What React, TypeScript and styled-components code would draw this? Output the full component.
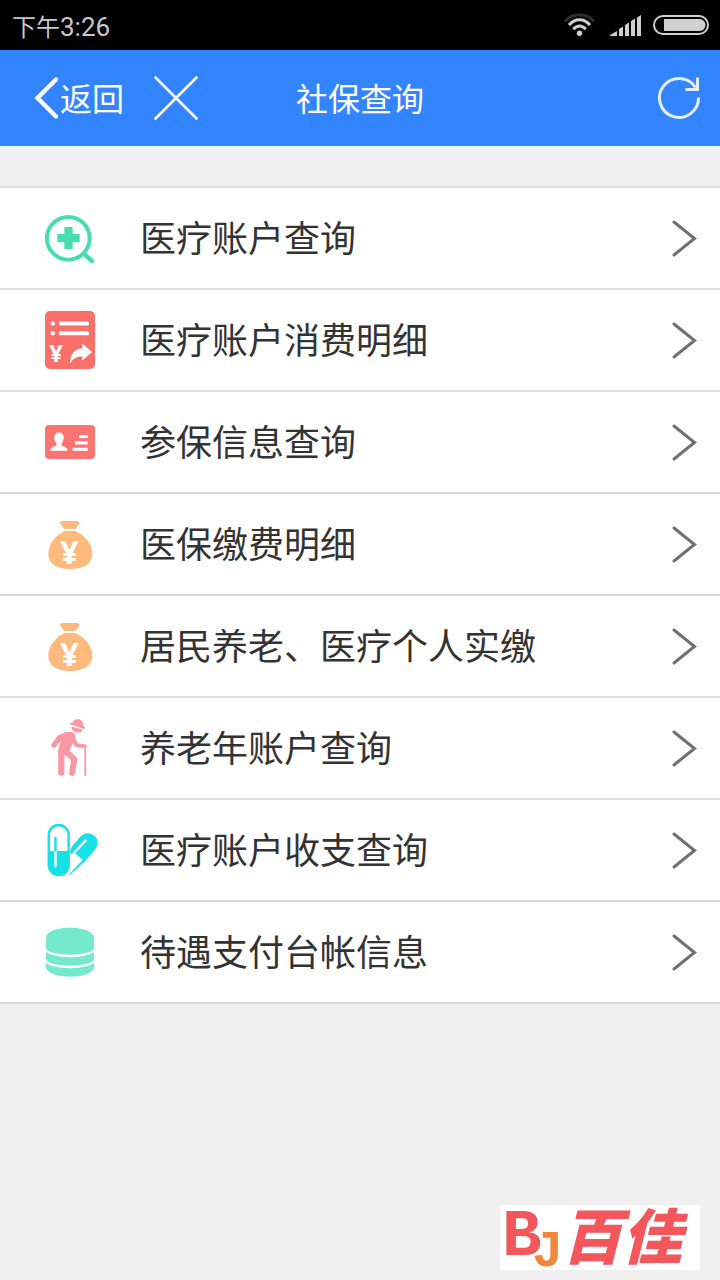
import React from "react";
import styled, { createGlobalStyle } from "styled-components";

const GlobalStyle = createGlobalStyle`
  * { box-sizing: border-box; }
  body {
    margin: 0;
    background: #f0f0f0;
    color: #333;
    font-family: Roboto, "Noto Sans CJK SC", sans-serif;
  }
`;

const Page = styled.div`
  display: flex;
  flex-direction: column;
  min-height: 100vh;
`;

const StatusBar = styled.div`
  display: flex;
  align-items: center;
  justify-content: space-between;
  height: 50px;
  padding: 0 11px 0 12px;
  background: #000;
  color: #c8c8c8;
`;

const Clock = styled.time`
  display: flex;
  align-items: baseline;
  padding-top: 4px;
  font-size: 26px;
  line-height: 32px;
`;

const Period = styled.span`
  font-size: 24px;
`;

const StatusIcons = styled.div`
  display: flex;
  align-items: center;
`;

const Header = styled.header`
  display: grid;
  grid-template-columns: 1fr auto 1fr;
  align-items: center;
  height: 96px;
  padding: 0 16px;
  background: #3385ff;
  color: #fff;
`;

const HeaderGroup = styled.div<{ $end?: boolean }>`
  display: flex;
  align-items: center;
  gap: 28px;
  padding-left: 16px;
  justify-content: ${(p) => (p.$end ? "flex-end" : "flex-start")};
`;

const HeaderButton = styled.button`
  display: flex;
  align-items: center;
  padding: 0;
  border: 0;
  background: none;
  color: inherit;
  font: inherit;
  font-size: 32px;
  line-height: 48px;
  cursor: pointer;
`;

const HeaderLabel = styled.span`
  padding-top: 4px;
`;

const Title = styled.h1`
  margin: 0;
  padding-top: 4px;
  font-size: 32px;
  line-height: 48px;
  font-weight: 400;
`;

const Menu = styled.ul`
  margin: 40px 0 0;
  padding: 0;
  list-style: none;
  border-top: 2px solid #dcdcdc;
`;

const MenuItem = styled.li`
  background: #fff;
  border-bottom: 2px solid #dcdcdc;
`;

const MenuLink = styled.a`
  display: flex;
  align-items: center;
  gap: 40px;
  height: 100px;
  padding: 0 22px 0 40px;
  color: inherit;
  text-decoration: none;
`;

const MenuLabel = styled.span`
  flex: 1;
  padding-top: 4px;
  font-size: 36px;
  line-height: 52px;
`;

const ItemIcon = styled.svg`
  flex: none;
  width: 60px;
  height: 60px;
`;

const Yen = styled.text`
  font-family: "Noto Sans", sans-serif;
  font-weight: 700;
  text-anchor: middle;
  fill: #fff;
`;

const Footer = styled.footer`
  display: flex;
  justify-content: flex-end;
  margin-top: auto;
  padding: 20px 20px 10px;
`;

const Logo = styled.svg`
  width: 200px;
  height: 65px;
  overflow: visible;
  background: #fff;
`;

const Monogram = styled.text`
  font-family: "Liberation Mono", monospace;
  font-weight: 700;
`;

const Wordmark = styled.text`
  font-family: "Noto Sans CJK SC", sans-serif;
  font-weight: 900;
  font-style: italic;
`;

const MedicalSearch = () => (
  <ItemIcon viewBox="0 0 60 60" aria-hidden="true" stroke="#48dcb0" fill="none">
    <circle cx="28.3" cy="30.3" r="21.4" strokeWidth="4" />
    <path d="M44 46l8 7" strokeWidth="4.4" strokeLinecap="round" />
    <path d="M17.3 30.2h22.4M28.5 19v22" strokeWidth="8.3" />
  </ItemIcon>
);

const Bill = () => (
  <ItemIcon viewBox="0 0 60 60" aria-hidden="true" fill="#fff">
    <rect x="5" y="1" width="50" height="58" rx="5" fill="#f9706b" />
    <circle cx="12.8" cy="13.4" r="2.2" />
    <circle cx="12.8" cy="23.2" r="2.2" />
    <rect x="19" y="11.5" width="30" height="4" rx="1.5" />
    <rect x="19" y="21.2" width="30" height="4" rx="1.5" />
    <Yen x="16" y="52" fontSize="24">¥</Yen>
    <path d="M52 42L42.3 33.6v4.6C34 39 30 45 30 53.6c3-5.2 7-7 12.3-7v3.9z" />
  </ItemIcon>
);

const IdCard = () => (
  <ItemIcon viewBox="0 0 60 60" aria-hidden="true" fill="#fff">
    <rect x="5" y="13" width="50" height="34" rx="4" fill="#f87571" />
    <path d="M19 20.5c3 0 4.7 2 4.7 5 0 2.5-1 4.5-2.2 5.7v2.3c2.5 1.2 6 1.7 6 5.3H10.3c0-3.6 3.7-4.1 6.2-5.3v-2.3c-1.2-1.2-2.2-3.2-2.2-5.7 0-3 1.7-5 4.7-5z" />
    <path d="M39 23h8.7v3H39zM35 29.3h12.7v3.2H35zM32.7 35.7h15v3h-15z" />
  </ItemIcon>
);

const MoneyBag = () => (
  <ItemIcon viewBox="0 0 60 60" aria-hidden="true" fill="#fdba7c">
    <path d="M22.5 7H37c2 0 3 1.5 2 3l-2.5 3.5Q35.500 15 34 15h-8.500q-1.500 0-2.500-1.500L20.400 10c-1-1.500 0-3 2.100-3z" />
    <path d="M25 17h10c8 3 17.3 12 17.3 22.5C52.3 50 44 55 30.3 55S8.3 50 8.3 39.500C8.300 29 17 20 25 17z" />
    <Yen x="29.5" y="50" fontSize="33">¥</Yen>
  </ItemIcon>
);

const Elder = () => (
  <ItemIcon viewBox="0 0 60 60" aria-hidden="true" fill="#fb98a4">
    <path d="M32 5.2C33 2.5 35 1.2 37.6 1.2c3.7 0 5.6 2.6 5.7 6.6l2 1.7c.4 1-.7 1.5-2 1.2L30.5 6.6c-1.800-.6-1.500-1.700 0-1.600z" />
    <path d="M31.3 8.4l11.5 3.3c-.8 2-2.8 2.9-5.1 2.9-3.3 0-6-2.4-6.4-6.200z" />
    <path d="M24 14.8c4-1.5 9.5-1.3 11 1.4 1.1 2 .5 4-.7 6.3L29.2 33 27 38l-8.700-1c0-7 1.500-13 4-18z" />
    <g fill="none" stroke="#fb98a4" strokeLinecap="round" strokeLinejoin="round">
      <path d="M25.5 17.3l-6 2.4-5.5 7.3" strokeWidth="5.4" />
      <path d="M21.3 33v21.7" strokeWidth="6.2" />
      <path d="M25.5 33l8.8 8.2L32 55" strokeWidth="6" />
      <path d="M33 20l3.5 7.3 8.3 1" strokeWidth="4" />
      <path d="M45.3 28v30" strokeWidth="1.8" strokeLinecap="butt" />
    </g>
  </ItemIcon>
);

const Pills = () => (
  <ItemIcon viewBox="0 0 60 60" aria-hidden="true" fill="#17e0e6">
    <rect x="8.8" y="5" width="19.8" height="50" rx="9.9" fill="#fff" stroke="#17e0e6" strokeWidth="2.4" />
    <path d="M8 31h21.5v14a10.75 10.75 0 0 1-21.5 0z" />
    <path d="M14.3 18q0-1.5 1.2-1.5t1.2 1.5v13h-2.4z" />
    <path d="M14.3 31h2.4v15q0 1.5-1.2 1.5t-1.2-1.5z" fill="#fff" />
    <path d="M31.5 27L40 17c4-4.8 10-5 14.5-1.2 4 3.8 4.2 9 .5 13.7l-9.500 11.300-16 14.400-.7-.7L42.800 40 33.500 32l-2.500 2.500-1-2.500z" />
    <path d="M45.7 20.5L34.5 32.3" stroke="#fff" strokeWidth="2.2" strokeLinecap="round" />
  </ItemIcon>
);

const Database = () => (
  <ItemIcon viewBox="0 0 60 60" aria-hidden="true">
    <path d="M6 16C6 2.3 54 2.3 54 16v28.5c0 13.500-48 13.500-48 0z" fill="#74e9cc" />
    <path d="M5 26.5c3 10 47 10 50 0M5 37.500c3 10 47 10 50 0" fill="none" stroke="#fff" strokeWidth="2.4" />
  </ItemIcon>
);

const Chevron = () => (
  <svg width="28" height="40" viewBox="0 0 28 40" aria-hidden="true">
    <path d="M4 4l20.5 16.5L4 37" fill="none" stroke="#707070" strokeWidth="3" strokeLinecap="round" />
  </svg>
);

const items = [
  { label: "医疗账户查询", Icon: MedicalSearch },
  { label: "医疗账户消费明细", Icon: Bill },
  { label: "参保信息查询", Icon: IdCard },
  { label: "医保缴费明细", Icon: MoneyBag },
  { label: "居民养老、医疗个人实缴", Icon: MoneyBag },
  { label: "养老年账户查询", Icon: Elder },
  { label: "医疗账户收支查询", Icon: Pills },
  { label: "待遇支付台帐信息", Icon: Database },
];

export default function App() {
  return (
    <Page>
      <GlobalStyle />
      <StatusBar>
        <Clock dateTime="15:26">
          <Period>下午</Period>3:26
        </Clock>
        <StatusIcons>
          <svg width="146" height="30" viewBox="0 0 146 30" aria-hidden="true" fill="none">
            <g strokeWidth="3">
              <path d="M2 11.5C9 2.5 24 2.5 31 11.5" stroke="#2d2d2d" />
              <path d="M6 15c6-7 15-7 21 0M10.3 19.2c4-4.2 8.5-4.2 12.5 0" stroke="#d0d0d0" />
            </g>
            <circle cx="16.5" cy="23.3" r="2.7" fill="#d0d0d0" />
            <path d="M47 26v-1l7-4v5zM56 26v-7l4-2.5V26zM62 26V15l4-2.5V26zM68 26V11l4-2.5V26zM74 26V7.5L78 5v21z" fill="#d0d0d0" />
            <rect x="91" y="6" width="54" height="18" rx="9" stroke="#d0d0d0" strokeWidth="2" />
            <path d="M101 9h35.5a6 6 0 0 1 0 12H101z" fill="#d0d0d0" />
          </svg>
        </StatusIcons>
      </StatusBar>
      <Header>
        <HeaderGroup>
          <HeaderButton type="button">
            <svg width="28" height="48" viewBox="0 0 28 48" aria-hidden="true">
              <path d="M24 5.5L5.5 24 24 42.5" fill="none" stroke="#fff" strokeWidth="4.4" strokeLinecap="round" />
            </svg>
            <HeaderLabel>返回</HeaderLabel>
          </HeaderButton>
          <HeaderButton type="button" aria-label="关闭">
            <svg width="48" height="48" viewBox="0 0 48 48" aria-hidden="true">
              <path d="M3.5 3.5l41 41M44.5 3.5l-41 41" stroke="#fff" strokeWidth="2.6" strokeLinecap="round" />
            </svg>
          </HeaderButton>
        </HeaderGroup>
        <Title>社保查询</Title>
        <HeaderGroup $end>
          <HeaderButton type="button" aria-label="刷新">
            <svg width="48" height="48" viewBox="0 0 48 48" aria-hidden="true" fill="none" stroke="#e2edff" strokeWidth="3">
              <path d="M42.5 23.5A19.5 19.5 0 1 1 39.5 13.5M41.500 3.500v12H29.500" />
            </svg>
          </HeaderButton>
        </HeaderGroup>
      </Header>
      <Menu>
        {items.map(({ label, Icon }) => (
          <MenuItem key={label}>
            <MenuLink href="#">
              <Icon />
              <MenuLabel>{label}</MenuLabel>
              <Chevron />
            </MenuLink>
          </MenuItem>
        ))}
      </Menu>
      <Footer>
        <Logo viewBox="0 0 200 65" role="img" aria-label="BJ百佳">
          <Monogram x="2" y="50" fontSize="66" fill="#f3565b">
            B<tspan x="32" y="61" fontSize="52" fill="#f0883c">J</tspan>
          </Monogram>
          <Wordmark x="62" y="54" fontSize="60" fill="#f3565b">百佳</Wordmark>
        </Logo>
      </Footer>
    </Page>
  );
}
